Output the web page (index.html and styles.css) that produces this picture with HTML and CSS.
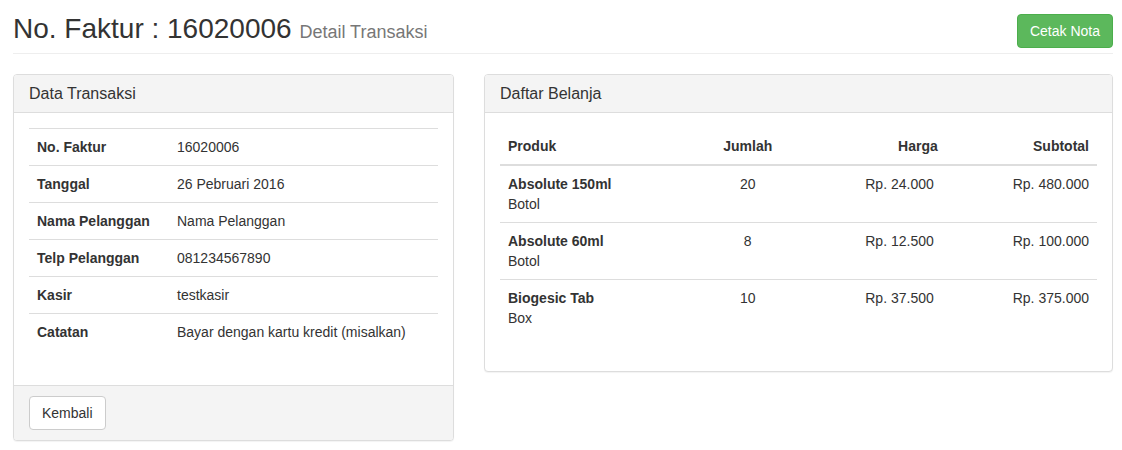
FILE: index.html
```html
<!DOCTYPE html>
<html lang="id">
<head>
<meta charset="utf-8">
<title>Detail Transaksi</title>
<link rel="stylesheet" href="styles.css">
</head>
<body>
<header class="page-header">
  <h1 class="page-title">No. Faktur : 16020006 <small>Detail Transaksi</small></h1>
  <button type="button" class="btn btn-success">Cetak Nota</button>
</header>
<main class="columns">
  <section class="panel">
    <h2 class="panel-heading">Data Transaksi</h2>
    <div class="panel-body">
      <table class="table details">
        <tbody>
          <tr><th scope="row">No. Faktur</th><td>16020006</td></tr>
          <tr><th scope="row">Tanggal</th><td>26 Pebruari 2016</td></tr>
          <tr><th scope="row">Nama Pelanggan</th><td>Nama Pelanggan</td></tr>
          <tr><th scope="row">Telp Pelanggan</th><td>081234567890</td></tr>
          <tr><th scope="row">Kasir</th><td>testkasir</td></tr>
          <tr><th scope="row">Catatan</th><td>Bayar dengan kartu kredit (misalkan)</td></tr>
        </tbody>
      </table>
    </div>
    <div class="panel-footer"><button type="button" class="btn btn-default">Kembali</button></div>
  </section>
  <section class="panel">
    <h2 class="panel-heading">Daftar Belanja</h2>
    <div class="panel-body">
      <table class="table items">
        <thead>
          <tr><th scope="col" class="product">Produk</th><th scope="col" class="quantity center">Jumlah</th><th scope="col" class="price right">Harga</th><th scope="col" class="subtotal right">Subtotal</th></tr>
        </thead>
        <tbody>
          <tr><td><strong>Absolute 150ml</strong><br>Botol</td><td class="center">20</td><td class="right">Rp. 24.000</td><td class="right">Rp. 480.000</td></tr>
          <tr><td><strong>Absolute 60ml</strong><br>Botol</td><td class="center">8</td><td class="right">Rp. 12.500</td><td class="right">Rp. 100.000</td></tr>
          <tr><td><strong>Biogesic Tab</strong><br>Box</td><td class="center">10</td><td class="right">Rp. 37.500</td><td class="right">Rp. 375.000</td></tr>
        </tbody>
      </table>
    </div>
  </section>
</main>
</body>
</html>
```
FILE: styles.css
```css
* { box-sizing: border-box; }
body {
  margin: 0;
  padding: 14px 9px 9px 13px;
  background: #fff;
  color: #333;
  font: 14px/20px "Liberation Sans", Arial, sans-serif;
}
.page-header {
  display: flex;
  justify-content: space-between;
  align-items: flex-start;
  border-bottom: 1px solid #eee;
  margin-bottom: 20px;
}
.page-title {
  margin: 0;
  padding-bottom: 9px;
  font-size: 28px;
  line-height: 30px;
  font-weight: 400;
}
.page-title small { font-size: 18px; line-height: 18px; color: #777; }
.btn {
  padding: 6px 12px;
  border: 1px solid #ccc;
  border-radius: 4px;
  background: #fff;
  color: #333;
  font: inherit;
}
.btn-success { background: #5cb85c; border-color: #4cae4c; color: #fff; }
.columns {
  display: grid;
  grid-template-columns: 441fr 629fr;
  gap: 30px;
  align-items: start;
}
.panel {
  border: 1px solid #ddd;
  border-radius: 4px;
  background: #fff;
  box-shadow: 0 1px 1px rgba(0, 0, 0, 0.05);
}
.panel-heading {
  margin: 0;
  padding: 10px 15px;
  border-bottom: 1px solid #ddd;
  border-radius: 3px 3px 0 0;
  background: #f4f4f4;
  font-size: 16px;
  line-height: 17px;
  font-weight: 400;
}
.panel-body { padding: 15px; }
.panel-footer {
  padding: 10px 15px;
  border-top: 1px solid #ddd;
  border-radius: 0 0 3px 3px;
  background: #f4f4f4;
}
.table {
  width: 100%;
  margin-bottom: 20px;
  border-collapse: collapse;
}
.table th, .table td {
  padding: 8px;
  border-top: 1px solid #ddd;
  text-align: left;
  vertical-align: top;
}
.table thead th { border-top: 0; border-bottom: 2px solid #ddd; }
.details th { width: 140px; white-space: nowrap; }
.items { table-layout: fixed; }
.items .product { width: 33%; }
.items .quantity { width: 17%; }
.items .price { width: 24%; padding-right: 4px; }
.items .subtotal { width: 26%; }
.table .center { text-align: center; }
.table .right { text-align: right; }
```
